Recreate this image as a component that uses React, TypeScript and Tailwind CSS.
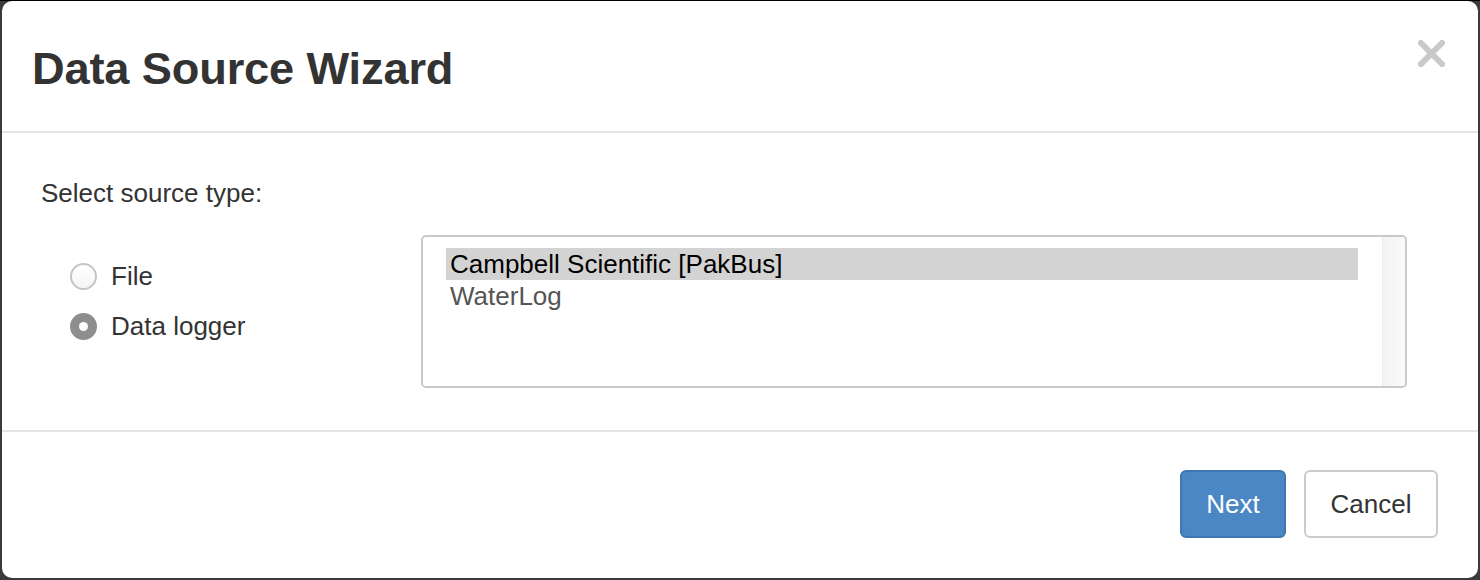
import React from 'react';

const sources = ['Campbell Scientific [PakBus]', 'WaterLog'];

const Radio: React.FC<{ checked?: boolean; label: string }> = ({ checked, label }) => {
  return (
    <label className="flex h-[50px] items-center gap-[14px]">
      {checked ? (
        <span className="flex h-[27px] w-[27px] items-center justify-center rounded-full bg-[#8e8e90]">
          <span className="h-[9px] w-[9px] rounded-full bg-white" />
        </span>
      ) : (
        <span className="h-[27px] w-[27px] rounded-full border-2 border-[#c4c4c4] bg-gradient-to-b from-white to-[#f4f4f4]" />
      )}
      <span className="text-[26px] leading-[32px] text-[#333]">{label}</span>
    </label>
  );
};

export default function App() {
  return (
    <div
      className="h-[580px] w-[1480px] border-t border-black bg-[#3b3b3b] pb-[2px] pl-[2px] pr-[2px]"
      style={{ fontFamily: '"Liberation Sans", Arial, sans-serif' }}
    >
      <div className="flex h-full flex-col overflow-hidden rounded-[10px] bg-white">
        {/* header */}
        <div className="flex h-[132px] shrink-0 justify-between border-b-2 border-[#e5e5e5] pl-[30px] pr-[33px]">
          <h4 className="self-center pt-[5px] text-[45.2px] font-bold leading-none tracking-[-0.15px] text-[#333]">
            Data Source Wizard
          </h4>
          <button className="mt-[39px] self-start" aria-label="Close">
            <svg width="27" height="27" viewBox="0 0 27 27">
              <path d="M3 3 L24 24 M24 3 L3 24" stroke="#c9c9c9" strokeWidth="6" strokeLinecap="square" />
            </svg>
          </button>
        </div>

        {/* body */}
        <div className="h-[299px] shrink-0 border-b-2 border-[#e5e5e5] pl-[39px] pt-[44px]">
          <p className="text-[26px] leading-[32px] text-[#333]">Select source type:</p>
          <div className="mt-[26px] flex">
            <div className="w-[380px] pl-[29px] pt-[16px]">
              <Radio label="File" />
              <Radio label="Data logger" checked />
            </div>
            <div className="flex h-[153px] w-[986px] overflow-hidden rounded-[5px] border-2 border-[#c9c9c9]">
              <div className="flex-1 pl-[23px] pr-[24px] pt-[11px]">
                {sources.map((s, i) => (
                  <div
                    key={s}
                    className={`h-[32px] pl-[4px] text-[26px] leading-[32px] ${
                      i === 0 ? 'bg-[#d3d3d3] text-black' : 'text-[#555]'
                    }`}
                  >
                    {s}
                  </div>
                ))}
              </div>
              <div className="w-[23px] border-l border-[#ececec] bg-gradient-to-r from-[#f3f3f3] to-[#fafafa]" />
            </div>
          </div>
        </div>

        {/* footer */}
        <div className="flex flex-1 items-center justify-end gap-[18px] pb-[2px] pr-[40px]">
          <button className="h-[68px] w-[106px] rounded-[6px] border-2 border-[#3e78b4] bg-[#4a87c4] text-[26px] text-white">
            Next
          </button>
          <button className="h-[68px] w-[134px] rounded-[6px] border-2 border-[#cccccc] bg-white text-[26px] text-[#333]">
            Cancel
          </button>
        </div>
      </div>
    </div>
  );
}
